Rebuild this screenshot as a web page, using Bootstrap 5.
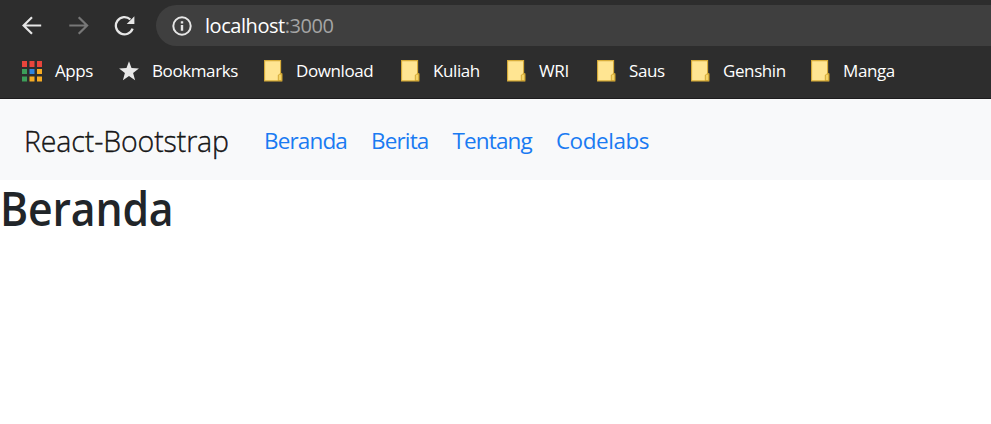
<!DOCTYPE html>
<html lang="id">
<head>
<meta charset="utf-8">
<meta name="viewport" content="width=device-width, initial-scale=1">
<title>React-Bootstrap</title>
<link href="https://cdn.jsdelivr.net/npm/bootstrap@5.3.0/dist/css/bootstrap.min.css" rel="stylesheet">
<style>
body{font-family:"Open Sans","Noto Sans",sans-serif;overflow:hidden}
svg{display:block;flex:none}
.browser{height:99px;background:#2d2d2d;border-bottom:1px solid #1c1b1d}
.toolbar{height:51px;padding-left:21px}
.tool{width:46.5px}
.address{height:41px;margin-left:-4.5px;padding-left:16px;background:#3f3f3f;border-radius:21px 0 0 21px;font-size:20px;letter-spacing:-.45px;color:#fff}
.address svg{margin-right:13px}
.address .port{color:#a5a5a5}
.bookmarks{height:40px;padding-left:22px;font-size:17px;letter-spacing:-.4px;color:#fff}
.bm{flex:none}
.bm svg{margin-right:13px}
.site-nav{height:81px;padding:0 0 0 24px;background:#f8f9fa}
.site-nav .navbar-brand{width:240px;margin:0;padding:3px 0 0;font-size:28.5px;font-weight:300;letter-spacing:-.12px;-webkit-text-stroke:.4px currentColor;color:rgba(0,0,0,.9);line-height:1}
.site-nav .navbar-nav .nav-link{padding:3px 0 0;font-size:22.5px;letter-spacing:-.85px;color:#1a7bf2;line-height:1}
.site-nav .navbar-nav .nav-link:last-child{letter-spacing:-.45px}
.page-title{width:fit-content;padding-top:1px;font-size:46.5px;font-weight:600;letter-spacing:-.2px;line-height:1.2;color:#212529;transform:scaleX(.92);transform-origin:0 0}
</style>
</head>
<body>
<svg width="0" height="0" class="position-absolute"><defs>
<g id="folder"><path d="M.6.6h16v13.2h1.2v7.1H.6z" fill="#ffe592" stroke="#d8ad3a" stroke-width="1.1"/><path d="M14.300 20.500v-5.400l1.500-1h2v6.500h-3.500z" fill="#f4d468" stroke="#c99c27" stroke-width=".8"/></g>
</defs></svg>
<header class="browser">
<div class="toolbar d-flex align-items-center">
<div class="tool"><svg width="22" height="22" viewBox="0 0 22 22" fill="none" stroke="#e6e6e6" stroke-width="2.2"><path d="M20.200 10.500H2.500M11 2.200l-8.400 8.300 8.400 8.300"/></svg></div>
<div class="tool"><svg width="22" height="22" viewBox="0 0 22 22" fill="none" stroke="#777" stroke-width="2.2"><path d="M1.300 10.500h17.900M10.700 2.200l8.400 8.300-8.400 8.300"/></svg></div>
<div class="tool"><svg width="22" height="22" viewBox="0 0 22 22"><path d="M18.600 13.600A8.600 8.600 0 1 1 16.400 4.500" fill="none" stroke="#e6e6e6" stroke-width="2.3"/><path d="M20.400 1.200v7.700h-7.700z" fill="#e6e6e6"/></svg></div>
<div class="address d-flex align-items-center flex-grow-1">
<svg width="20" height="20" viewBox="0 0 20 20"><circle cx="10" cy="10" r="8.700" fill="none" stroke="#e6e6e6" stroke-width="2"/><path d="M8.800 9h2.400v5.800H8.800zM8.800 5.200h2.400v2.200H8.800z" fill="#e6e6e6"/></svg>
<span class="url">localhost<span class="port">:3000</span></span>
</div>
</div>
<nav class="bookmarks d-flex align-items-center">
<div class="bm d-flex align-items-center" style="width:97px"><svg width="20" height="21" viewBox="0 0 20 21"><path d="M0 0h5v6H0zM7.500 0h5v6h-5zM15 0h5v6h-5z" fill="#e8453c"/><path d="M0 8h5v5H0zM0 15.500h5v5H0z" fill="#3c9e5a"/><path d="M7.500 8h5v5h-5z" fill="#2d83e0"/><path d="M15 8h5v5h-5zM7.500 15.500h5v5h-5zM15 15.500h5v5h-5z" fill="#f5ab24"/></svg><span>Apps</span></div>
<div class="bm d-flex align-items-center" style="width:145px"><svg width="20" height="20" viewBox="0 0 20 20"><path d="M10 .2l2.500 6.900 7.400.3-5.800 4.600 2 7.300-6.100-4.200-6.100 4.200 2-7.300L.1 7.400l7.400-.3z" fill="#e8e8e8"/></svg><span>Bookmarks</span></div>
<div class="bm d-flex align-items-center" style="width:137px"><svg width="19" height="22"><use href="#folder"/></svg><span>Download</span></div>
<div class="bm d-flex align-items-center" style="width:106px"><svg width="19" height="22"><use href="#folder"/></svg><span>Kuliah</span></div>
<div class="bm d-flex align-items-center" style="width:90px"><svg width="19" height="22"><use href="#folder"/></svg><span>WRI</span></div>
<div class="bm d-flex align-items-center" style="width:94px"><svg width="19" height="22"><use href="#folder"/></svg><span>Saus</span></div>
<div class="bm d-flex align-items-center" style="width:120px"><svg width="19" height="22"><use href="#folder"/></svg><span>Genshin</span></div>
<div class="bm d-flex align-items-center"><svg width="19" height="22"><use href="#folder"/></svg><span>Manga</span></div>
</nav>
</header>
<nav class="navbar navbar-expand site-nav">
<a class="navbar-brand" href="#">React-Bootstrap</a>
<div class="navbar-nav gap-4">
<a class="nav-link" href="#">Beranda</a>
<a class="nav-link" href="#">Berita</a>
<a class="nav-link" href="#">Tentang</a>
<a class="nav-link" href="#">Codelabs</a>
</div>
</nav>
<main><h2 class="page-title mb-0">Beranda</h2></main>
<script src="https://cdn.jsdelivr.net/npm/bootstrap@5.3.0/dist/js/bootstrap.bundle.min.js"></script>
</body>
</html>
